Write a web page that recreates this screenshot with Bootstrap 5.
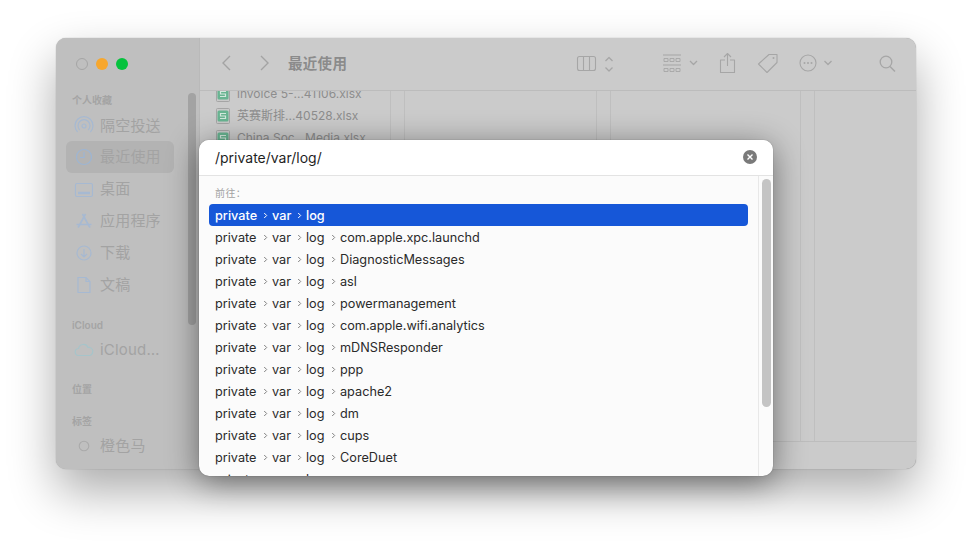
<!DOCTYPE html>
<html lang="zh">
<head>
<meta charset="utf-8">
<title>Finder</title>
<link href="https://cdn.jsdelivr.net/npm/bootstrap@5.3.0/dist/css/bootstrap.min.css" rel="stylesheet">
<style>
html,body{height:100%;margin:0}
body{background:#fff;overflow:hidden;font-family:Inter,"Noto Sans CJK SC",sans-serif;padding:38px 0 0 56px}
.fwin{position:relative;width:860px;height:431px;border-radius:10px;background:#cbcbcb;box-shadow:0 0 1px rgba(0,0,0,.45),0 22px 48px rgba(0,0,0,.33)}
.fside{width:144px;flex:none;background:#bfbfbf;position:relative;border-right:1px solid #b9b9b9;border-radius:10px 0 0 10px;overflow:hidden;padding:0 10px}
.lights{height:51px;padding:20px 0 0 10px;gap:8px}
.light{width:12px;height:12px;border-radius:50%}
.sect{font:600 10px "Inter","Noto Sans CJK SC",sans-serif;color:#a4a4a4;height:14px;line-height:14px;padding-left:6px}
.sitem{height:32px;font-size:15px;color:#a3a3a3;gap:6px;padding-left:8px;letter-spacing:.2px;width:108px;border-radius:6px;white-space:nowrap}
.sitem svg{flex:none}
.sitem.cur{background:#b3b3b3}
.sbar{position:absolute;left:132px;top:55px;width:8px;height:232px;border-radius:4px;background:#a3a3a3}
.fmain{min-width:0}
.ftool{height:53px;flex:none;border-bottom:1px solid #bcbcbc;position:relative;padding:0 0 3px 20px;color:#9e9e9e}
.ftitle{font:600 14.5px "Inter","Noto Sans CJK SC",sans-serif;color:#8b8b8b;margin-left:17px;letter-spacing:.3px}
.fcols{min-height:0;overflow:hidden;position:relative}
.colg{flex:none;border-right:1px solid #bfbfbf;height:100%}
.col1{width:191px;overflow:hidden}
.fname{height:22px;gap:7px;font-size:12px;color:#8d8d8d;padding-left:16px;white-space:nowrap}
.fstat{height:28px;flex:none;border-top:1px solid #bdbdbd}
.toolic{position:absolute;top:0;left:0}
.dlg{position:absolute;left:143px;top:102px;width:574px;height:336px;background:#fbfbfb;border-radius:10px;overflow:hidden;box-shadow:0 0 1px rgba(0,0,0,.5),0 6px 32px rgba(0,0,0,.48)}
.dhead{height:36px;background:#fff;border-bottom:1px solid #e3e3e3;padding:0 16px 1px;font-size:14px;color:#1f1f1f}
.dclear{width:14px;height:14px;border-radius:50%;background:#7a7a7a;display:flex;align-items:center;justify-content:center}
.dbody{height:300px;overflow:hidden}
.dlist{width:560px;flex:none;border-right:1px solid #e8e8e8;padding:0 10px;overflow:hidden}
.dcap{height:28px;font-size:10px;color:#a2a2a2;padding:9px 6px 0;line-height:16px;letter-spacing:.4px}
.drow{height:22px;font-size:12.7px;color:#2a2a2a;padding:1px 0 0 6px;border-radius:4px;white-space:nowrap}
.drow.sel{background:#1657d8;color:#fff;font-weight:500}
.seg{display:inline-block}
.s1{width:46.5px}.s2,.s3{width:23.5px}
.chev{width:7px;flex:none;margin-right:3.5px}
.dscroll{flex:1;position:relative}
.dthumb{position:absolute;left:3px;top:3px;width:9px;height:228px;border-radius:5px;background:#c4c4c4}
</style>
</head>
<body>
<div class="fwin d-flex">
  <aside class="fside">
    <div class="lights d-flex">
      <span class="light" style="border:1px solid #a5a5a5"></span>
      <span class="light" style="background:#f7a72d"></span>
      <span class="light" style="background:#05c23d"></span>
    </div>
    <div class="sect" style="margin-top:4px">个人收藏</div>
    <div class="sitem d-flex align-items-center" style="margin-top:3px"><svg width="20" height="20" viewBox="0 0 20 20" fill="none" stroke="#a6b9d2" stroke-width="1.2"><circle cx="10" cy="10" r="2"/><path d="M5.800 14a6 6 0 1 1 8.400 0M3.600 16a9 9 0 1 1 12.800 0"/></svg>隔空投送</div>
    <div class="sitem cur d-flex align-items-center" style="margin-top:-1px"><svg width="20" height="20" viewBox="0 0 20 20" fill="none" stroke="#9db5d3" stroke-width="1.2"><circle cx="10" cy="10" r="7.500"/><path d="M10 5v5.500H6"/></svg>最近使用</div>
    <div class="sitem d-flex align-items-center" style="padding-top:1px"><svg width="20" height="20" viewBox="0 0 20 20" fill="none" stroke="#a6b9d2" stroke-width="1.2"><rect x="1.500" y="3.500" width="17" height="13" rx="1.500"/><path d="M4 13h12" stroke-width="2.400"/></svg>桌面</div>
    <div class="sitem d-flex align-items-center"><svg width="20" height="20" viewBox="0 0 20 20" fill="none" stroke="#a6b9d2" stroke-width="1.600"><path d="M11.500 3 5 15M8.500 3 15 15M2.500 13.500h15M4 16.500l1-1.500M16 16.500l-1-1.500"/></svg>应用程序</div>
    <div class="sitem d-flex align-items-center"><svg width="20" height="20" viewBox="0 0 20 20" fill="none" stroke="#a6b9d2" stroke-width="1.2"><circle cx="10" cy="10" r="7"/><path d="M10 6v8M7 11l3 3 3-3"/></svg>下载</div>
    <div class="sitem d-flex align-items-center"><svg width="20" height="20" viewBox="0 0 20 20" fill="none" stroke="#a6b9d2" stroke-width="1.2"><path d="M4 2.500h8l4 4v11H4zM12 2.500v4h4"/></svg>文稿</div>
    <div class="sect" style="margin-top:17px">iCloud</div>
    <div class="sitem d-flex align-items-center" style="margin-top:2px"><svg width="20" height="20" viewBox="0 0 20 20" fill="none" stroke="#a6c4ca" stroke-width="1.2"><path d="M5 15.500a3.500 3.500 0 0 1-.5-7A5 5 0 0 1 14 7.500a4 4 0 0 1 1.500 8z"/></svg>iCloud…</div>
    <div class="sect" style="margin-top:16px">位置</div>
    <div class="sect" style="margin-top:18px">标签</div>
    <div class="sitem d-flex align-items-center" style="margin-top:2px"><svg width="20" height="20" viewBox="0 0 20 20" fill="none" stroke="#aaa" stroke-width="1.100"><circle cx="10" cy="10" r="4.800"/></svg>橙色马</div>
    <div class="sbar"></div>
  </aside>
  <main class="fmain flex-grow-1 d-flex flex-column">
    <header class="ftool d-flex align-items-center">
      <svg width="14" height="18" viewBox="0 0 14 18" fill="none" stroke="#a3a3a3" stroke-width="1.400"><path d="M10 2 3 9l7 7"/></svg>
      <svg width="14" height="18" viewBox="0 0 14 18" fill="none" stroke="#a3a3a3" stroke-width="1.400" style="margin-left:23px"><path d="m4 2 7 7-7 7"/></svg>
      <span class="ftitle">最近使用</span>
      <svg class="toolic" width="716" height="52" viewBox="0 0 716 52" fill="none" stroke="#a6a6a6" stroke-width="1.100" stroke-linejoin="round">
        <rect x="377.500" y="18.500" width="18" height="14" rx="2"/><path d="M383.500 18.500v14M389.500 18.500v14"/>
        <path d="m405.500 23 3.500-3.500 3.500 3.500M405.500 29.500l3.500 3.500 3.500-3.500" stroke-width="1.300"/>
        <path d="M463 17h18M463 27h18"/><path d="M464 20.500h4v3h-4zM470 20.500h4v3h-4zM476 20.500h4v3h-4zM464 30.500h4v3h-4zM470 30.500h4v3h-4zM476 30.500h4v3h-4z" stroke-width=".9"/>
        <path d="m490 23 3.500 3.500L497 23" stroke-width="1.300"/>
        <path d="M525 22h-4.500v12.500h14V22H530M527.500 28V16M524 19l3.500-3.500L531 19"/>
        <path d="M558.500 26 569 16.500h8v8L567 34.500z"/><circle cx="573.500" cy="20" r="1" fill="#a6a6a6" stroke="none"/>
        <circle cx="608" cy="25" r="8"/><g fill="#a6a6a6" stroke="none"><circle cx="604.500" cy="25" r="1"/><circle cx="608" cy="25" r="1"/><circle cx="611.500" cy="25" r="1"/></g>
        <path d="m624.500 23 3.500 3.500 3.500-3.500" stroke-width="1.300"/>
        <circle cx="686" cy="24" r="5.800" stroke-width="1.300"/><path d="m690 28.500 5 5" stroke-width="1.500"/>
      </svg>
    </header>
    <div class="fcols flex-grow-1 d-flex">
      <div class="colg col1">
        <div style="margin-top:-8px">
          <div class="fname d-flex align-items-center"><svg width="14" height="16" viewBox="0 0 14 16" fill="none"><rect x=".5" y=".5" width="13" height="15" rx="1" fill="#c9c9c9" stroke="#a5a5a5"/><rect x="1.500" y="2.500" width="11" height="11" rx="1.500" fill="#68b491"/><path d="M10 5.500H4.500V8h5v2.500H4" stroke="#d3e8dd" stroke-width="1.200"/></svg>invoice 5-...41106.xlsx</div>
          <div class="fname d-flex align-items-center"><svg width="14" height="16" viewBox="0 0 14 16" fill="none"><rect x=".5" y=".5" width="13" height="15" rx="1" fill="#c9c9c9" stroke="#a5a5a5"/><rect x="1.500" y="2.500" width="11" height="11" rx="1.500" fill="#68b491"/><path d="M10 5.500H4.500V8h5v2.500H4" stroke="#d3e8dd" stroke-width="1.200"/></svg>英赛斯排...40528.xlsx</div>
          <div class="fname d-flex align-items-center"><svg width="14" height="16" viewBox="0 0 14 16" fill="none"><rect x=".5" y=".5" width="13" height="15" rx="1" fill="#c9c9c9" stroke="#a5a5a5"/><rect x="1.500" y="2.500" width="11" height="11" rx="1.500" fill="#68b491"/><path d="M10 5.500H4.500V8h5v2.500H4" stroke="#d3e8dd" stroke-width="1.200"/></svg>China Soc...Media.xlsx</div>
        </div>
      </div>
      <div class="colg" style="width:14px"></div>
      <div class="colg" style="width:192px"></div>
      <div class="colg" style="width:14px"></div>
      <div class="colg" style="width:190px"></div>
      <div class="colg" style="width:14px"></div>
    </div>
    <div class="fstat"></div>
  </main>
  <section class="dlg d-flex flex-column">
    <div class="dhead d-flex align-items-center justify-content-between">
      <span>/private/var/log/</span>
      <span class="dclear"><svg width="8" height="8" viewBox="0 0 8 8" stroke="#fff" stroke-width="1.400"><path d="m1.500 1.500 5 5M6.500 1.500l-5 5"/></svg></span>
    </div>
    <div class="dbody d-flex">
      <div class="dlist" id="L">
        <div class="dcap">前往：</div>
      </div>
      <div class="dscroll"><div class="dthumb"></div></div>
    </div>
  </section>
</div>
<script src="https://cdn.jsdelivr.net/npm/bootstrap@5.3.0/dist/js/bootstrap.bundle.min.js"></script>
<script>
const names=["","com.apple.xpc.launchd","DiagnosticMessages","asl","powermanagement","com.apple.wifi.analytics","mDNSResponder","ppp","apache2","dm","cups","CoreDuet",""];
const ch=c=>`<svg class="chev" width="7" height="9" viewBox="0 0 7 9" fill="none" stroke="${c}" stroke-width="1"><path d="m2.200 2 2.500 2.500-2.500 2.500"/></svg>`;
const L=document.getElementById('L');
names.forEach((n,i)=>{
  const c=i==0?'#fff':'#808080';
  const d=document.createElement('div');
  d.className='drow d-flex align-items-center'+(i==0?' sel':'');
  d.innerHTML=`<span class="seg s1">private</span>${ch(c)}<span class="seg s2">var</span>${ch(c)}<span class="seg s3">log</span>`+(n?`${ch(c)}<span class="seg">${n}</span>`:'');
  L.appendChild(d);
});
</script>
</body>
</html>
